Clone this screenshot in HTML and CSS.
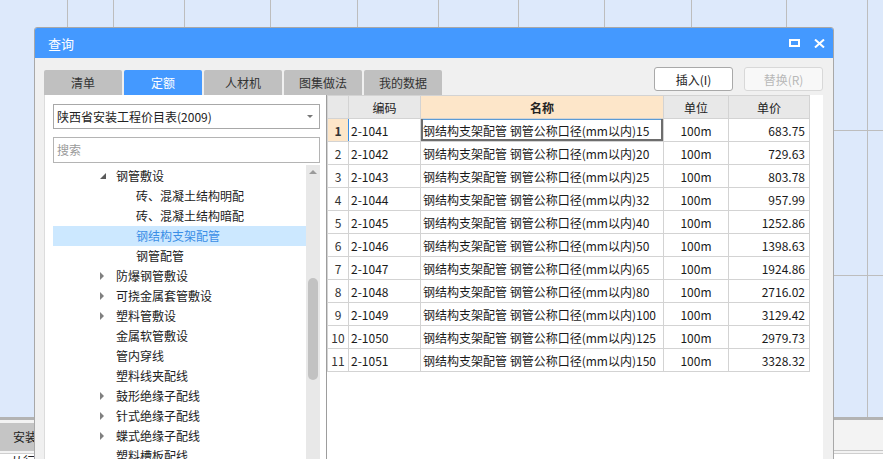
FILE: index.html
```html
<!DOCTYPE html>
<html lang="zh-CN">
<head>
<meta charset="utf-8">
<title>查询</title>
<link rel="stylesheet" href="styles.css">
</head>
<body>
<div class="app">
  <div class="app-top"></div>
  <div class="app-main"></div>
  <div class="app-bottom">
    <div class="app-tabs"><span class="app-tab">安装工程</span></div>
    <div class="app-status">从行</div>
  </div>
</div>

<div class="dialog">
  <div class="dlg-title">
    <span class="dlg-name">查询</span>
    <div class="dlg-ctrls">
      <svg class="ico" width="11" height="8" viewBox="0 0 11 8"><rect x="1" y="1" width="9" height="6" fill="none" stroke="#fff" stroke-width="2"/></svg>
      <svg class="ico" width="11" height="9" viewBox="0 0 11 9"><path d="M1 0.5 L10 8.5 M10 0.5 L1 8.5" stroke="#fff" stroke-width="2" fill="none"/></svg>
    </div>
  </div>
  <div class="dlg-body">
    <div class="toolbar">
      <div class="tabs">
        <div class="tab">清单</div>
        <div class="tab active">定额</div>
        <div class="tab">人材机</div>
        <div class="tab">图集做法</div>
        <div class="tab">我的数据</div>
      </div>
      <div class="actions">
        <button class="btn">插入(I)</button>
        <button class="btn disabled">替换(R)</button>
      </div>
    </div>
    <div class="content">
      <div class="left">
        <div class="select"><span>陕西省安装工程价目表(2009)</span><span class="caret"></span></div>
        <div class="search">搜索</div>
        <div class="tree-wrap">
          <ul class="tree">
            <li class="node l1"><span class="tw open"></span>钢管敷设</li>
            <li class="node l2"><span class="tw"></span>砖、混凝土结构明配</li>
            <li class="node l2"><span class="tw"></span>砖、混凝土结构暗配</li>
            <li class="node l2 sel"><span class="tw"></span>钢结构支架配管</li>
            <li class="node l2"><span class="tw"></span>钢管配管</li>
            <li class="node l1"><span class="tw closed"></span>防爆钢管敷设</li>
            <li class="node l1"><span class="tw closed"></span>可挠金属套管敷设</li>
            <li class="node l1"><span class="tw closed"></span>塑料管敷设</li>
            <li class="node l1"><span class="tw"></span>金属软管敷设</li>
            <li class="node l1"><span class="tw"></span>管内穿线</li>
            <li class="node l1"><span class="tw"></span>塑料线夹配线</li>
            <li class="node l1"><span class="tw closed"></span>鼓形绝缘子配线</li>
            <li class="node l1"><span class="tw closed"></span>针式绝缘子配线</li>
            <li class="node l1"><span class="tw closed"></span>蝶式绝缘子配线</li>
            <li class="node l1"><span class="tw"></span>塑料槽板配线</li>
          </ul>
          <div class="vscroll"><span class="arrow-up"></span><span class="thumb"></span></div>
        </div>
      </div>
      <div class="right">
        <table class="grid">
          <colgroup><col class="c-num"><col class="c-code"><col class="c-name"><col class="c-unit"><col class="c-price"></colgroup>
          <thead>
            <tr><th></th><th>编码</th><th class="hot">名称</th><th>单位</th><th>单价</th></tr>
          </thead>
          <tbody>
            <tr class="cur"><td class="num">1</td><td class="code">2-1041</td><td class="name selcell">钢结构支架配管 钢管公称口径(mm以内)15</td><td class="unit">100m</td><td class="price">683.75</td></tr>
            <tr><td class="num">2</td><td class="code">2-1042</td><td class="name">钢结构支架配管 钢管公称口径(mm以内)20</td><td class="unit">100m</td><td class="price">729.63</td></tr>
            <tr><td class="num">3</td><td class="code">2-1043</td><td class="name">钢结构支架配管 钢管公称口径(mm以内)25</td><td class="unit">100m</td><td class="price">803.78</td></tr>
            <tr><td class="num">4</td><td class="code">2-1044</td><td class="name">钢结构支架配管 钢管公称口径(mm以内)32</td><td class="unit">100m</td><td class="price">957.99</td></tr>
            <tr><td class="num">5</td><td class="code">2-1045</td><td class="name">钢结构支架配管 钢管公称口径(mm以内)40</td><td class="unit">100m</td><td class="price">1252.86</td></tr>
            <tr><td class="num">6</td><td class="code">2-1046</td><td class="name">钢结构支架配管 钢管公称口径(mm以内)50</td><td class="unit">100m</td><td class="price">1398.63</td></tr>
            <tr><td class="num">7</td><td class="code">2-1047</td><td class="name">钢结构支架配管 钢管公称口径(mm以内)65</td><td class="unit">100m</td><td class="price">1924.86</td></tr>
            <tr><td class="num">8</td><td class="code">2-1048</td><td class="name">钢结构支架配管 钢管公称口径(mm以内)80</td><td class="unit">100m</td><td class="price">2716.02</td></tr>
            <tr><td class="num">9</td><td class="code">2-1049</td><td class="name">钢结构支架配管 钢管公称口径(mm以内)100</td><td class="unit">100m</td><td class="price">3129.42</td></tr>
            <tr><td class="num">10</td><td class="code">2-1050</td><td class="name">钢结构支架配管 钢管公称口径(mm以内)125</td><td class="unit">100m</td><td class="price">2979.73</td></tr>
            <tr><td class="num">11</td><td class="code">2-1051</td><td class="name">钢结构支架配管 钢管公称口径(mm以内)150</td><td class="unit">100m</td><td class="price">3328.32</td></tr>
          </tbody>
        </table>
      </div>
    </div>
  </div>
</div>
</body>
</html>
```

FILE: styles.css
```css
* { box-sizing: border-box; }
html, body { margin: 0; padding: 0; }
body {
  width: 883px;
  height: 459px;
  overflow: hidden;
  position: relative;
  font-family: "Noto Sans CJK SC", "Noto Sans", sans-serif;
  font-size: 12px;
  color: #222;
  background: #dde9fb;
}

/* background application */
.app { height: 459px; display: flex; flex-direction: column; }
.app-top {
  height: 27px;
  flex: none;
  background:
    linear-gradient(#bdbdbd, #bdbdbd) 67px 0 / 1px 100% no-repeat,
    linear-gradient(#bdbdbd, #bdbdbd) 113px 0 / 1px 100% no-repeat,
    linear-gradient(#bdbdbd, #bdbdbd) 184px 0 / 1px 100% no-repeat,
    linear-gradient(#bdbdbd, #bdbdbd) 270px 0 / 1px 100% no-repeat,
    linear-gradient(#bdbdbd, #bdbdbd) 357px 0 / 1px 100% no-repeat,
    linear-gradient(#bdbdbd, #bdbdbd) 438px 0 / 1px 100% no-repeat,
    linear-gradient(#bdbdbd, #bdbdbd) 518px 0 / 1px 100% no-repeat,
    linear-gradient(#bdbdbd, #bdbdbd) 604px 0 / 1px 100% no-repeat,
    linear-gradient(#bdbdbd, #bdbdbd) 691px 0 / 1px 100% no-repeat,
    linear-gradient(#bdbdbd, #bdbdbd) 786px 0 / 1px 100% no-repeat,
    linear-gradient(#bdbdbd, #bdbdbd) 867px 0 / 1px 100% no-repeat,
    #dde9fb;
}
.app-main {
  flex: 1;
  background:
    linear-gradient(#bdbdbd, #bdbdbd) 867px 0 / 1px 100% no-repeat,
    linear-gradient(#bdbdbd, #bdbdbd) 786px 103px / 97px 1px no-repeat,
    linear-gradient(#bdbdbd, #bdbdbd) 786px 248px / 97px 1px no-repeat,
    #dde9fb;
}
.app-bottom {
  height: 42px;
  flex: none;
  border-top: 3px solid #b3b3b3;
  background: #f3f3f3;
}
.app-tabs {
  height: 31px;
  padding-top: 3px;
  border-bottom: 1px solid #c6c6c6;
  display: flex;
}
.app-tab {
  width: 90px;
  height: 27px;
  padding-left: 13px;
  line-height: 27px;
  background: #c5c5c5;
  color: #222;
}
.app-status {
  border-top: 1px solid #cfcfcf;
  margin-top: 2px;
  padding-left: 11px;
  line-height: 14px;
  background: #fff;
  height: 10px;
  overflow: hidden;
}

/* dialog window */
.dialog {
  position: absolute;
  left: 34px;
  top: 27px;
  width: 800px;
  height: 440px;
  border: 1px solid #a8a8a8;
  border-radius: 3px 3px 0 0;
  background: #f0f0f0;
  display: flex;
  flex-direction: column;
  overflow: hidden;
}
.dlg-title {
  height: 30px;
  flex: none;
  background: #4499ff;
  color: #fff;
  display: flex;
  align-items: center;
  padding: 0 8px 0 13px;
}
.dlg-name { flex: 1; font-size: 13px; }
.dlg-ctrls { display: flex; align-items: center; gap: 14px; }
.ico { display: block; }

.dlg-body {
  flex: 1;
  min-height: 0;
  display: flex;
  flex-direction: column;
  padding: 9px 10px 0 9px;
}
.toolbar {
  height: 28px;
  flex: none;
  display: flex;
  justify-content: space-between;
}
.tabs { display: flex; gap: 2px; align-self: flex-end; }
.tab {
  width: 78px;
  height: 25px;
  line-height: 25px;
  text-align: center;
  background: #c0c0c0;
  color: #333;
  border-radius: 2px 2px 0 0;
}
.tab.active { background: #4499ff; color: #fff; }
.actions { display: flex; gap: 11px; align-self: flex-start; }
.btn {
  width: 79px;
  height: 24px;
  padding: 0;
  border: 1px solid #a9a9a9;
  border-radius: 3px;
  background: #fff;
  font-family: "Noto Sans CJK SC", "Noto Sans", sans-serif;
  font-size: 12px;
  color: #222;
}
.btn.disabled { color: #b8b8b8; border-color: #d8d8d8; background: #f8f8f8; }

.content { flex: 1; min-height: 0; display: flex; }
.left {
  width: 282px;
  flex: none;
  background: #fff;
  border-left: 1px solid #dcdcdc;
  padding: 9px 6px 0 8px;
  display: flex;
  flex-direction: column;
}
.select {
  height: 25px;
  flex: none;
  border: 1px solid #a8a8a8;
  display: flex;
  align-items: center;
  justify-content: space-between;
  padding: 0 6px 0 3px;
  color: #222;
}
.caret {
  width: 0; height: 0;
  border-left: 3px solid transparent;
  border-right: 3px solid transparent;
  border-top: 3px solid #777;
}
.search {
  height: 26px;
  flex: none;
  margin-top: 8px;
  border: 1px solid #b4b4b4;
  padding-left: 3px;
  line-height: 24px;
  color: #9a9a9a;
}
.tree-wrap { flex: 1; min-height: 0; margin-top: 2px; display: flex; overflow: hidden; }
.tree { flex: 1; list-style: none; margin: 0; padding: 1px 0 0; }
.node {
  height: 20px;
  line-height: 20px;
  display: flex;
  align-items: center;
  white-space: nowrap;
  color: #222;
}
.node.l1 { padding-left: 47px; }
.node.l2 { padding-left: 67px; }
.node.sel { background: #cce8ff; color: #3a8ee6; }
.tw { width: 16px; flex: none; height: 20px; position: relative; display: flex; align-items: center; }
.tw.open::before {
  content: "";
  width: 0; height: 0;
  border-left: 6px solid transparent;
  border-bottom: 6px solid #5a5a5a;
}
.tw.closed::before {
  content: "";
  width: 0; height: 0;
  border-left: 4px solid #808080;
  border-top: 4px solid transparent;
  border-bottom: 4px solid transparent;
}
.vscroll {
  width: 14px;
  flex: none;
  background: #e8e8e8;
  display: flex;
  flex-direction: column;
  align-items: center;
}
.arrow-up {
  margin-top: 5px;
  width: 0; height: 0;
  border-left: 4px solid transparent;
  border-right: 4px solid transparent;
  border-bottom: 4px solid #9a9a9a;
}
.thumb {
  margin-top: 104px;
  width: 10px;
  height: 102px;
  border-radius: 5px;
  background: #c2c2c2;
}

.right {
  flex: 1;
  background: #fff;
  border-left: 1px solid #9d9d9d;
}
.grid {
  border-collapse: collapse;
  table-layout: fixed;
  width: 482px;
  font-size: 12px;
  color: #1a1a1a;
}
.c-num { width: 21px; }
.c-code { width: 72px; }
.c-name { width: 243px; }
.c-unit { width: 65px; }
.c-price { width: 81px; }
.grid th, .grid td {
  border: 1px solid #d3d3d3;
  height: 23px;
  padding: 0 2px;
  white-space: nowrap;
  overflow: hidden;
}
.grid th { background: #e8e8e8; font-weight: normal; text-align: center; color: #222; }
.grid th.hot { background: #fde6c9; font-weight: bold; }
.grid td.num { text-align: center; padding: 0; color: #333; }
.grid tr.cur td.num { background: #fde6c9; font-weight: bold; border-right-color: #3c8fe6; }
.grid td.unit { text-align: center; }
.grid td.price { text-align: right; padding-right: 4px; }
.grid td.selcell {
  box-shadow: inset 2px 0 0 #6d6d6d, inset -2px 0 0 #6d6d6d, inset 0 -2px 0 #6d6d6d, inset 0 1px 0 #5b9bd5;
}
```
